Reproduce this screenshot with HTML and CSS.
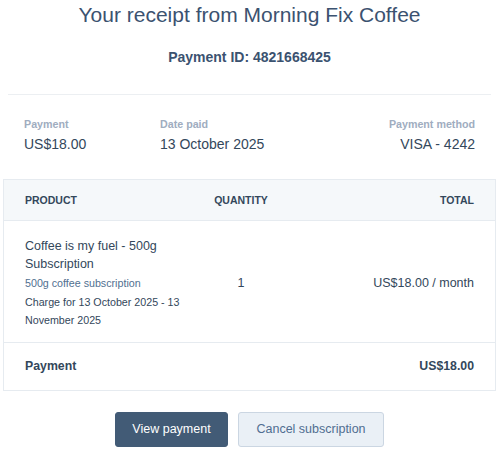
FILE: index.html
```html
<!DOCTYPE html>
<html>
<head>
<meta charset="utf-8">
<link rel="stylesheet" href="styles.css">
</head>
<body>
<div class="page">
  <h1 class="title">Your receipt from Morning Fix Coffee</h1>
  <div class="payment-id">Payment ID: 4821668425</div>
  <hr class="divider">
  <div class="info">
    <div class="info-item">
      <div class="info-label">Payment</div>
      <div class="info-value">US$18.00</div>
    </div>
    <div class="info-item">
      <div class="info-label">Date paid</div>
      <div class="info-value">13 October 2025</div>
    </div>
    <div class="info-item right">
      <div class="info-label">Payment method</div>
      <div class="info-value">VISA - 4242</div>
    </div>
  </div>
  <div class="table">
    <div class="row head">
      <div>PRODUCT</div>
      <div class="center">QUANTITY</div>
      <div class="right">TOTAL</div>
    </div>
    <div class="row item">
      <div class="product">
        <div class="product-name">Coffee is my fuel - 500g Subscription</div>
        <div class="product-desc">500g coffee subscription</div>
        <div class="product-period">Charge for 13 October 2025 - 13 November 2025</div>
      </div>
      <div class="center qty">1</div>
      <div class="right amount">US$18.00 / month</div>
    </div>
    <div class="row foot">
      <div>Payment</div>
      <div></div>
      <div class="right">US$18.00</div>
    </div>
  </div>
  <div class="actions">
    <button class="btn primary">View payment</button>
    <button class="btn secondary">Cancel subscription</button>
  </div>
</div>
</body>
</html>
```

FILE: styles.css
```css
* { box-sizing: border-box; }
html, body { margin: 0; padding: 0; background: #fff; }
body {
  font-family: "Liberation Sans", Arial, Helvetica, sans-serif;
  color: #33475b;
  width: 500px;
  height: 450px;
  overflow: hidden;
}
.page { padding: 0 4px 0 3px; }
.title {
  margin: 0;
  padding-top: 1px;
  font-size: 21px;
  font-weight: 400;
  line-height: 28px;
  text-align: center;
  color: #3b5270;
}
.payment-id {
  margin-top: 19px;
  font-size: 14px;
  font-weight: 700;
  text-align: center;
  line-height: 18px;
  color: #3b5270;
}
.divider {
  margin: 28px 5px 0 5px;
  border: 0;
  border-top: 1px solid #eceff2;
  height: 0;
}
.info {
  display: flex;
  padding: 22px 21px 0 21px;
}
.info-item { flex: 0 0 auto; }
.info-item:first-child { width: 136px; }
.info-item.right { margin-left: auto; text-align: right; }
.info-label {
  font-size: 10.7px;
  font-weight: 700;
  color: #a0adbf;
  line-height: 14px;
}
.info-value {
  margin-top: 4px;
  font-size: 14px;
  line-height: 18px;
  color: #33475b;
}
.table {
  margin-top: 26px;
  border: 1px solid #e6ebf0;
}
.row {
  display: grid;
  grid-template-columns: 180px 72px 1fr;
  padding: 0 21px;
  align-items: center;
}
.row + .row { border-top: 1px solid #e6ebf0; }
.center { text-align: center; }
.right { text-align: right; }
.head {
  height: 40px;
  background: #f5f8fa;
  font-size: 10.5px;
  font-weight: 700;
  color: #33475b;
}
.item { padding-top: 16px; padding-bottom: 12px; }
.product-name {
  font-size: 12.5px;
  line-height: 18px;
  color: #33475b;
}
.product-desc {
  margin-top: 0.5px;
  font-size: 10.7px;
  line-height: 19px;
  color: #516f90;
}
.product-period {
  font-size: 10.7px;
  line-height: 18.5px;
  color: #33475b;
}
.qty, .amount { font-size: 12.5px; }
.foot {
  height: 48px;
  font-size: 12.3px;
  font-weight: 700;
}
.actions {
  display: flex;
  justify-content: center;
  gap: 10px;
  margin-top: 21px;
}
.btn {
  height: 35px;
  border-radius: 3px;
  font-family: inherit;
  font-size: 12.5px;
  padding: 0;
  white-space: nowrap;
  cursor: pointer;
}
.primary {
  background: #425b76;
  border: 1px solid #425b76;
  color: #fff;
  width: 113px;
}
.secondary {
  background: #eaf0f6;
  border: 1px solid #cbd6e2;
  color: #506e91;
  width: 146px;
}
```
